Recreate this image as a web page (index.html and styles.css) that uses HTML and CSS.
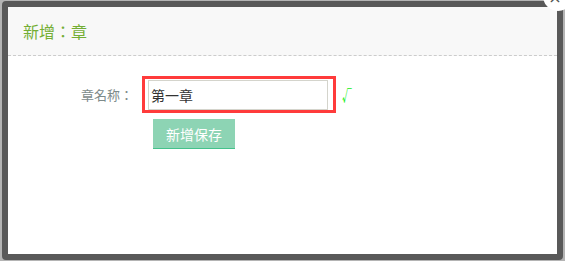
FILE: index.html
```html
<!DOCTYPE html>
<html lang="zh-CN">
<head>
    <meta charset="UTF-8">
    <title>新增：章</title>
    <link rel="stylesheet" href="styles.css">
</head>
<body>
    <div class="layer">
        <div class="layer-title" lang="zh-TW">新增：章</div>
        <div class="layer-body">
            <form class="chapter-form">
                <div class="form-row">
                    <label class="form-label" for="chapterName" lang="zh-TW">章名称：</label>
                    <div class="input-wrap">
                        <input type="text" id="chapterName" class="form-input" value="第一章">
                    </div>
                    <span class="valid-mark">√</span>
                </div>
                <div class="form-actions">
                    <button type="button" class="btn-save">新增保存</button>
                </div>
            </form>
        </div>
        <span class="layer-close">×</span>
    </div>
</body>
</html>
```

FILE: styles.css
```css
html, body {
    height: 100%;
}
body {
    margin: 0;
    padding: 1px 2px 0 2px;
    box-sizing: border-box;
    background-color: #b4b4b4;
    font-family: "Noto Sans CJK SC", "Liberation Sans", sans-serif;
    overflow: hidden;
}
.layer {
    position: relative;
    height: 259px;
    box-sizing: border-box;
    border: 6px solid #595959;
    border-radius: 4px;
    background-color: #ffffff;
}
.layer-title {
    height: 48px;
    line-height: 48px;
    padding-left: 15px;
    background-color: #f8f8f8;
    border-bottom: 1px dashed #cccccc;
    color: #74ae34;
    font-size: 16px;
    font-family: "Noto Sans CJK TC", sans-serif;
}
.layer-close {
    position: absolute;
    top: -26px;
    right: -16px;
    width: 30px;
    height: 30px;
    border-radius: 50%;
    background-color: #ffffff;
    color: #555555;
    font-size: 16px;
    line-height: 30px;
    text-align: center;
    font-family: "DejaVu Sans", sans-serif;
    text-indent: -6px;
    padding-top: 2px;
    box-sizing: border-box;
}
.layer-body {
    padding-top: 20px;
}
.form-row {
    display: flex;
    align-items: center;
}
.form-label {
    width: 125px;
    text-align: right;
    color: #7d8a8a;
    font-size: 13px;
    margin-right: 9px;
    font-family: "Noto Sans CJK TC", sans-serif;
}
.input-wrap {
    border: 3px solid #ff3b3b;
    padding: 1px 5px 0 3px;
}
.form-input {
    display: block;
    width: 180px;
    height: 30px;
    box-sizing: border-box;
    border: 1px solid #d4d4cc;
    padding: 0 2px;
    font-size: 14px;
    color: #333333;
    font-family: "Noto Sans CJK SC", sans-serif;
    outline: none;
}
.valid-mark {
    display: inline-block;
    margin-left: 6px;
    color: #11ee11;
    font-size: 15px;
    font-weight: bold;
    font-family: "Noto Sans CJK SC", sans-serif;
    transform: scaleX(0.65);
    transform-origin: left center;
}
.form-actions {
    padding: 6px 0 0 145px;
}
.btn-save {
    width: 82px;
    height: 30px;
    border: none;
    border-bottom: 1px solid #44c28c;
    background-color: #8dd4b4;
    color: #ffffff;
    font-size: 14px;
    font-family: "Noto Sans CJK SC", sans-serif;
    padding: 0;
}
```
